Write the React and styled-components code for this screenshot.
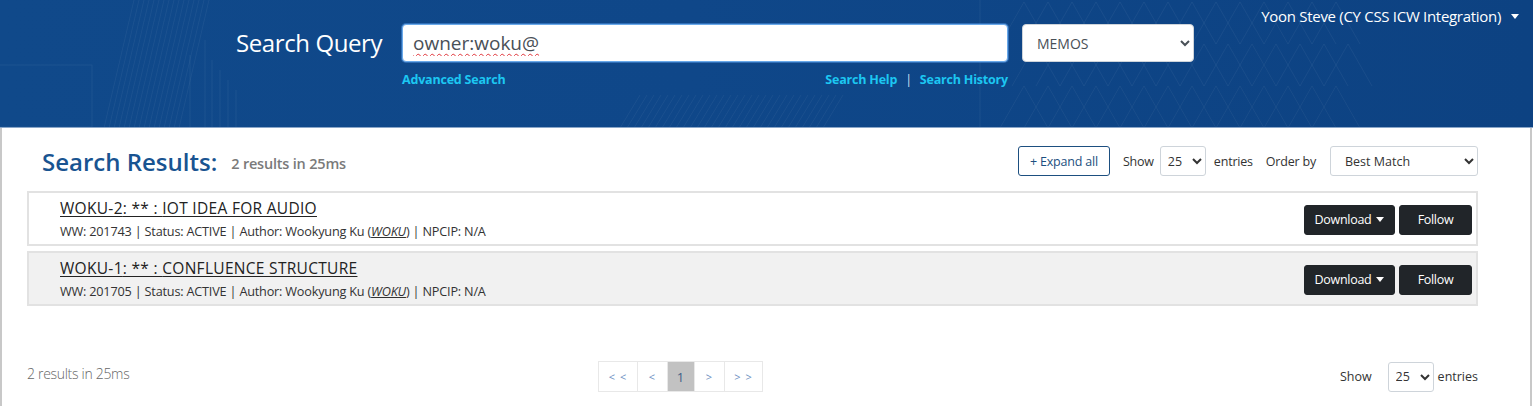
import React from 'react'
import styled, { createGlobalStyle } from 'styled-components'

const GlobalStyle = createGlobalStyle`
  html, body {
    margin: 0;
    padding: 0;
    background: #fff;
    font-family: "Open Sans", "Noto Sans", "Liberation Sans", sans-serif;
    color: #212529;
  }
  * { box-sizing: border-box; }
`

const Banner = styled.header`
  height: 128px;
  display: flex;
  align-items: flex-start;
  position: relative;
  overflow: hidden;
  border-bottom: 1px solid #8aa6c8;
  background: linear-gradient(90deg, #10498a 0%, #0f4789 45%, #0d4282 100%);
`

const Deco = styled.svg`
  position: absolute;
  inset: 0;
  pointer-events: none;
`

const SearchArea = styled.div`
  margin-left: 236px;
  padding-top: 24px;
  display: flex;
  align-items: flex-start;
  position: relative;
`

const QueryLabel = styled.label`
  width: 166px;
  color: #fff;
  font-size: 24px;
  line-height: 38px;
  letter-spacing: -0.4px;
`

const QueryColumn = styled.div`
  display: flex;
  flex-direction: column;
  width: 606px;
`

const QueryInput = styled.input`
  height: 38px;
  width: 100%;
  border: 1px solid #6aa9e9;
  border-radius: 4px;
  padding: 0 10px;
  font-family: inherit;
  font-size: 19px;
  color: #495057;
  outline: none;
  box-shadow: 0 0 0 1px rgba(80,150,230,0.5);
  text-decoration: underline wavy #e0343a;
  text-decoration-thickness: 1px;
  text-underline-offset: 3px;
`

const LinkRow = styled.div`
  display: flex;
  margin-top: 9px;
  font-size: 12.5px;
  font-weight: 700;
  letter-spacing: -0.2px;
`

const BannerLink = styled.a`
  color: #1cc7f2;
  text-decoration: none;
  ${p => p.$push && 'margin-left: auto;'}
`

const Divider = styled.span`
  color: #d5e3f5;
  margin: 0 8px;
  font-weight: 400;
`

const TypeSelect = styled.select`
  margin-left: 14px;
  width: 172px;
  height: 38px;
  border: 1px solid #ced4da;
  border-radius: 4px;
  padding: 0 10px;
  font-family: inherit;
  font-size: 14px;
  color: #495057;
  background: #fff;
`

const UserMenu = styled.div`
  margin-left: auto;
  margin-right: 14px;
  padding-top: 6px;
  color: #fff;
  font-size: 15px;
  letter-spacing: -0.3px;
  display: flex;
  align-items: center;
  gap: 10px;
  position: relative;
`

const Caret = styled.span`
  width: 0;
  height: 0;
  border-left: ${p => p.$s ?? 4}px solid transparent;
  border-right: ${p => p.$s ?? 4}px solid transparent;
  border-top: ${p => (p.$s ?? 4) + 1}px solid #fff;
`

const Main = styled.main`
  border-left: 2px solid #c8c8c8;
  border-right: 2px solid #c8c8c8;
  margin-right: 1px;
  padding: 18px 52px 0 25px;
  height: 278px;
  display: flex;
  flex-direction: column;
`

const ResultsBar = styled.div`
  display: flex;
  align-items: center;
  height: 30px;
  margin-bottom: 15px;
`

const ResultsTitle = styled.h2`
  margin: 0 0 0 15px;
  font-size: 24px;
  font-weight: 600;
  color: #195491;
  letter-spacing: 0;
`

const ResultsMeta = styled.span`
  margin-left: 14px;
  margin-top: 4px;
  font-size: 14.5px;
  font-weight: 600;
  color: #7a7a7a;
  letter-spacing: -0.2px;
`

const Controls = styled.div`
  margin-left: auto;
  display: flex;
  align-items: center;
  font-size: 12.5px;
  color: #333;
  letter-spacing: -0.2px;
`

const OutlineButton = styled.button`
  height: 30px;
  padding: 0 11px;
  border: 1px solid #1d4f80;
  border-radius: 3px;
  background: #fff;
  color: #1d4f80;
  font-family: inherit;
  font-size: 12.5px;
  letter-spacing: -0.2px;
  margin-right: 13px;
`

const SmallSelect = styled.select`
  height: 30px;
  width: ${p => p.$w}px;
  margin: 0 ${p => p.$mr ?? 8}px 0 ${p => p.$ml ?? 6}px;
  border: 1px solid #ced4da;
  border-radius: 3px;
  background: #fff;
  font-family: inherit;
  font-size: 12.5px;
  color: #333;
  padding: 0 ${p => p.$pl ?? 3}px;
`

const ResultList = styled.div`
  display: flex;
  flex-direction: column;
  gap: 5px;
`

const ResultRow = styled.div`
  height: 55px;
  border: 2px solid #e2e2e2;
  background: ${p => (p.$shade ? '#f1f1f1' : '#fff')};
  display: flex;
  align-items: center;
  padding: 0 4px 0 31px;
`

const ResultText = styled.div`
  display: flex;
  flex-direction: column;
  gap: 3px;
`

const ResultTitle = styled.a`
  font-size: 15.5px;
  font-weight: 500;
  color: #222;
  text-decoration: underline;
  text-underline-offset: 2px;
  letter-spacing: 0.3px;
`

const ResultInfo = styled.div`
  font-size: 12.7px;
  color: #333;
  letter-spacing: -0.2px;
  em { text-decoration: underline; }
`

const RowActions = styled.div`
  margin-left: auto;
  margin-top: 2px;
  display: flex;
  gap: 4px;
`

const DarkButton = styled.button`
  height: 30px;
  width: ${p => p.$w}px;
  background: #212529;
  border: 1px solid #212529;
  border-radius: 3px;
  color: #fff;
  font-family: inherit;
  font-size: 12.5px;
  letter-spacing: -0.3px;
  display: flex;
  align-items: center;
  justify-content: center;
  gap: 5px;
`

const Footer = styled.div`
  margin-top: auto;
  margin-bottom: 14px;
  display: grid;
  grid-template-columns: 571px auto 1fr;
  align-items: center;
`

const FooterMeta = styled.span`
  font-size: 14px;
  font-weight: 300;
  color: #666;
  letter-spacing: -0.3px;
  margin-bottom: 6px;
`

const Pager = styled.div`
  display: flex;
  border: 1px solid #e8e8e8;
  height: 31px;
`

const PageItem = styled.span`
  width: ${p => p.$w}px;
  display: flex;
  align-items: center;
  justify-content: center;
  border-left: ${p => (p.$first ? 'none' : '1px solid #e8e8e8')};
  background: ${p => (p.$active ? '#c2c2c2' : '#fff')};
  color: ${p => (p.$active ? '#3f5f86' : '#6d8fbf')};
  font-size: ${p => (p.$active ? '13px' : '11px')};
  letter-spacing: 1px;
`

const FooterShow = styled.div`
  justify-self: end;
  display: flex;
  align-items: center;
  font-size: 12.5px;
  color: #333;
`

const results = [
  { id: 'WOKU-2', title: 'IOT IDEA FOR AUDIO', ww: '201743' },
  { id: 'WOKU-1', title: 'CONFLUENCE STRUCTURE', ww: '201705' },
]

const pages = [
  { label: '<<', w: 38 },
  { label: '<', w: 30 },
  { label: '1', w: 27, active: true },
  { label: '>', w: 30 },
  { label: '>>', w: 38 },
]

const BannerArt = () => (
  <Deco width="1533" height="128" viewBox="0 0 1533 128">
    <g stroke="rgba(255,255,255,0.06)" fill="none" strokeWidth="1">
      <rect x="-2" y="65" width="94" height="62" />
      <line x1="190" y1="55" x2="190" y2="128" />
      <line x1="205" y1="40" x2="205" y2="128" />
      <line x1="212" y1="60" x2="212" y2="128" />
      <line x1="220" y1="70" x2="220" y2="128" />
      <line x1="228" y1="80" x2="228" y2="128" />
      <line x1="236" y1="90" x2="236" y2="128" />
      <line x1="980" y1="0" x2="980" y2="128" />
    </g>
    <g stroke="rgba(255,255,255,0.05)" strokeWidth="1">
      {Array.from({ length: 16 }).map((_, i) => (
        <line key={i} x1={104 + i * 5} y1="128" x2={134 + i * 5} y2="0" />
      ))}
      {Array.from({ length: 30 }).map((_, i) => (
        <line key={'b' + i} x1={620 + i * 7} y1="128" x2={640 + i * 7} y2="95" />
      ))}
    </g>
    <g stroke="rgba(255,255,255,0.05)" fill="none" strokeWidth="1">
      {Array.from({ length: 14 }).map((_, i) => (
        <path key={i} d={`M${1000 + i * 24} 128 L${1024 + i * 24} 86 L${1048 + i * 24} 128 M${1012 + i * 24} 86 L${1036 + i * 24} 44 L${1060 + i * 24} 86 M${1000 + i * 24} 44 L${1024 + i * 24} 2 L${1048 + i * 24} 44`} />
      ))}
    </g>
  </Deco>
)

export default function App() {
  return (
    <>
      <GlobalStyle />
      <Banner>
        <BannerArt />
        <SearchArea>
          <QueryLabel htmlFor="q">Search Query</QueryLabel>
          <QueryColumn>
            <QueryInput id="q" defaultValue="owner:woku@" spellCheck={false} />
            <LinkRow>
              <BannerLink href="#">Advanced Search</BannerLink>
              <BannerLink href="#" $push>Search Help</BannerLink>
              <Divider>|</Divider>
              <BannerLink href="#">Search History</BannerLink>
            </LinkRow>
          </QueryColumn>
          <TypeSelect defaultValue="MEMOS">
            <option>MEMOS</option>
          </TypeSelect>
        </SearchArea>
        <UserMenu>
          Yoon Steve (CY CSS ICW Integration)
          <Caret />
        </UserMenu>
      </Banner>

      <Main>
        <ResultsBar>
          <ResultsTitle>Search Results:</ResultsTitle>
          <ResultsMeta>2 results in 25ms</ResultsMeta>
          <Controls>
            <OutlineButton>+ Expand all</OutlineButton>
            Show
            <SmallSelect $w={46} defaultValue="25">
              <option>25</option>
            </SmallSelect>
            entries
            <span style={{ marginLeft: 13 }}>Order by</span>
            <SmallSelect $w={148} $ml={14} $mr={0} $pl={10} defaultValue="Best Match">
              <option>Best Match</option>
            </SmallSelect>
          </Controls>
        </ResultsBar>

        <ResultList>
          {results.map((r, i) => (
            <ResultRow key={r.id} $shade={i % 2 === 1}>
              <ResultText>
                <ResultTitle href="#">{r.id}: ** : {r.title}</ResultTitle>
                <ResultInfo>
                  WW: {r.ww} | Status: ACTIVE | Author: Wookyung Ku (<em>WOKU</em>) | NPCIP: N/A
                </ResultInfo>
              </ResultText>
              <RowActions>
                <DarkButton $w={91}>
                  Download <Caret $s={4} />
                </DarkButton>
                <DarkButton $w={73}>Follow</DarkButton>
              </RowActions>
            </ResultRow>
          ))}
        </ResultList>

        <Footer>
          <FooterMeta>2 results in 25ms</FooterMeta>
          <Pager>
            {pages.map((p, i) => (
              <PageItem key={p.label} $w={p.w} $active={p.active} $first={i === 0}>
                {p.label.split('').join(' ')}
              </PageItem>
            ))}
          </Pager>
          <FooterShow>
            Show
            <SmallSelect $w={46} $ml={16} $mr={4} defaultValue="25">
              <option>25</option>
            </SmallSelect>
            entries
          </FooterShow>
        </Footer>
      </Main>
    </>
  )
}
